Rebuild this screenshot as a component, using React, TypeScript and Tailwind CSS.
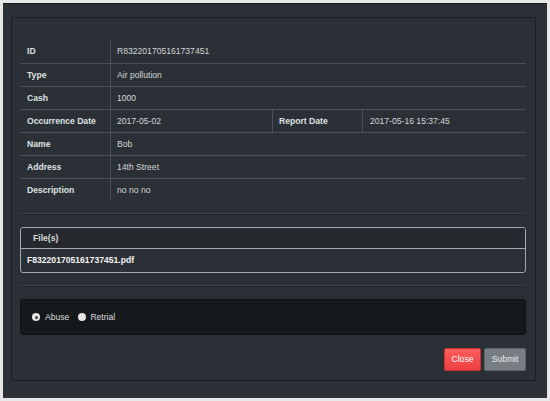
import React from "react";

const font = { fontFamily: '"Liberation Sans", Arial, sans-serif' };

function Row({ label, value, first }: { label: string; value: string; first?: boolean }) {
  return (
    <div className={`flex h-[23px] ${first ? "" : "border-t border-[#4a5056]"}`}>
      <div className="w-[91px] shrink-0 border-r border-[#4a5056] pl-[7px] flex items-center font-bold text-[#dfe1e3]">
        {label}
      </div>
      <div className="flex-1 pl-[6px] flex items-center text-[#d4d6d8]">{value}</div>
    </div>
  );
}

export default function App() {
  return (
    <div className="w-[550px] h-[401px] bg-[#e8e8e8] p-[3px] overflow-hidden" style={font}>
      <div className="h-[395px] bg-[#2b3136] border-t border-[#1a1d20] pt-[13px] pl-[8px] pr-[11px] pb-[17px]">
        <div className="h-[364px] border border-[#1b1f22] bg-[#2a3035] pt-[22px] pl-[8px] pr-[9px] pb-[9px] text-[8.6px]">
          {/* details table */}
          <div className="flex flex-col">
            <Row first label="ID" value="R832201705161737451" />
            <Row label="Type" value="Air pollution" />
            <Row label="Cash" value="1000" />
            <div className="flex h-[23px] border-t border-[#4a5056]">
              <div className="w-[91px] shrink-0 border-r border-[#4a5056] pl-[7px] flex items-center font-bold text-[#dfe1e3]">
                Occurrence Date
              </div>
              <div className="w-[162px] shrink-0 border-r border-[#4a5056] pl-[6px] flex items-center text-[#d4d6d8]">
                2017-05-02
              </div>
              <div className="w-[90px] shrink-0 border-r border-[#4a5056] pl-[6px] flex items-center font-bold text-[#dfe1e3]">
                Report Date
              </div>
              <div className="flex-1 pl-[7px] flex items-center text-[#d4d6d8]">2017-05-16 15:37:45</div>
            </div>
            <Row label="Name" value="Bob" />
            <Row label="Address" value="14th Street" />
            <Row label="Description" value="no no no" />
          </div>

          <div className="mt-[12px] h-[2px] border-t border-[#3c4248] bg-[#24282c]" />

          {/* files */}
          <div className="mt-[12px] h-[46px] border border-[#a3a7ab] rounded-[3px] overflow-hidden flex flex-col">
            <div className="h-[21px] bg-[#262a2f] border-b border-[#a3a7ab] pl-[12px] flex items-center font-bold text-[#d8dadc]">
              File(s)
            </div>
            <div className="flex-1 pl-[6px] flex items-center font-bold text-[#f4f4f4]">
              F832201705161737451.pdf
            </div>
          </div>

          <div className="mt-[12px] h-[2px] border-t border-[#3c4248] bg-[#24282c]" />

          {/* radio box */}
          <div className="mt-[12px] h-[36px] bg-[#16191c] border border-[#101214] rounded-[3px] flex items-center pl-[11px] text-[#d8dadc]">
            <span className="w-[8px] h-[8px] rounded-full bg-[#e6e6e6] flex items-center justify-center">
              <span className="w-[3px] h-[3px] rounded-full bg-[#3a3f44]" />
            </span>
            <span className="ml-[5px]">Abuse</span>
            <span className="ml-[9px] w-[8px] h-[8px] rounded-full bg-[#e6e6e6]" />
            <span className="ml-[4px]">Retrial</span>
          </div>

          {/* buttons */}
          <div className="mt-[13px] flex justify-end gap-[3px]">
            <button className="h-[23px] w-[37px] rounded-[2px] bg-gradient-to-b from-[#ff5c5c] to-[#ee3f42] border border-[#c8302f] text-white text-[8.6px]">
              Close
            </button>
            <button className="h-[23px] w-[42px] rounded-[2px] bg-[#767d83] border border-[#5d6368] text-[#eceeef] text-[8.6px]">
              Submit
            </button>
          </div>
        </div>
      </div>
    </div>
  );
}
